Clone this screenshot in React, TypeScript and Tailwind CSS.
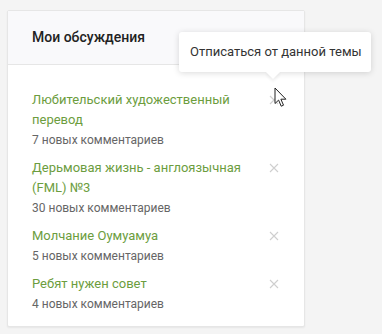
import React from 'react'

const items = [
  { title: 'Любительский художественный перевод', count: '7 новых комментариев', hover: true },
  { title: 'Дерьмовая жизнь - англоязычная (FML) №3', count: '30 новых комментариев' },
  { title: 'Молчание Оумуамуа', count: '5 новых комментариев' },
  { title: 'Ребят нужен совет', count: '4 новых комментариев' },
]

function CloseIcon() {
  return (
    <svg width={10} height={10} viewBox="0 0 10 10" className="shrink-0">
      <path d="M1 1L9 9M9 1L1 9" stroke="#cfcfcf" strokeWidth={1.1} />
    </svg>
  )
}

function Cursor() {
  return (
    <svg width={14} height={21} viewBox="0 0 14 21" className="absolute left-[274px] top-[87px]">
      <path d="M1 1v15.5l3.6-3.4 2.6 6.1 2.3-1-2.6-6h5z" fill="#fff" stroke="#222" strokeWidth={1} strokeLinejoin="round" />
    </svg>
  )
}

export default function App() {
  return (
    <div className="relative w-[382px] h-[334px] bg-[#f4f4f4] pt-[10px] pl-[7px]" style={{ fontFamily: 'Roboto, "Noto Sans", sans-serif' }}>
      <div className="w-[298px] bg-white border border-[#e6e6e6] rounded-[2px] shadow-[0_1px_2px_rgba(0,0,0,0.06)]">
        <div className="h-[54px] bg-[#f9f9fb] border-b border-[#e6e6e6] flex items-center pl-[24px]">
          <span className="text-[14px] font-medium text-[#222]">Мои обсуждения</span>
        </div>
        <div className="pt-[25px] pb-[12px] pl-[24px] pr-[25px] flex flex-col gap-[8px]">
          {items.map((it) => (
            <div key={it.title} className="flex justify-between">
              <div className="w-[215px]">
                <div className="text-[13px] leading-[20px] text-[#6c9d3e]">{it.title}</div>
                <div className="text-[12px] leading-[20px] text-[#666]">{it.count}</div>
              </div>
              <div className="h-[20px] flex items-center">
                <CloseIcon />
              </div>
            </div>
          ))}
        </div>
      </div>

      <div className="absolute left-[179px] top-[32px] w-[192px] h-[40px] bg-white rounded-[3px] shadow-[0_1px_6px_rgba(0,0,0,0.15)] flex items-center pl-[11px]">
        <span className="text-[13px] text-[#333] whitespace-nowrap">Отписаться от данной темы</span>
        <div className="absolute left-[89px] -bottom-[5px] w-[10px] h-[10px] bg-white rotate-45 shadow-[2px_2px_3px_rgba(0,0,0,0.06)]" />
      </div>
      <Cursor />
    </div>
  )
}
